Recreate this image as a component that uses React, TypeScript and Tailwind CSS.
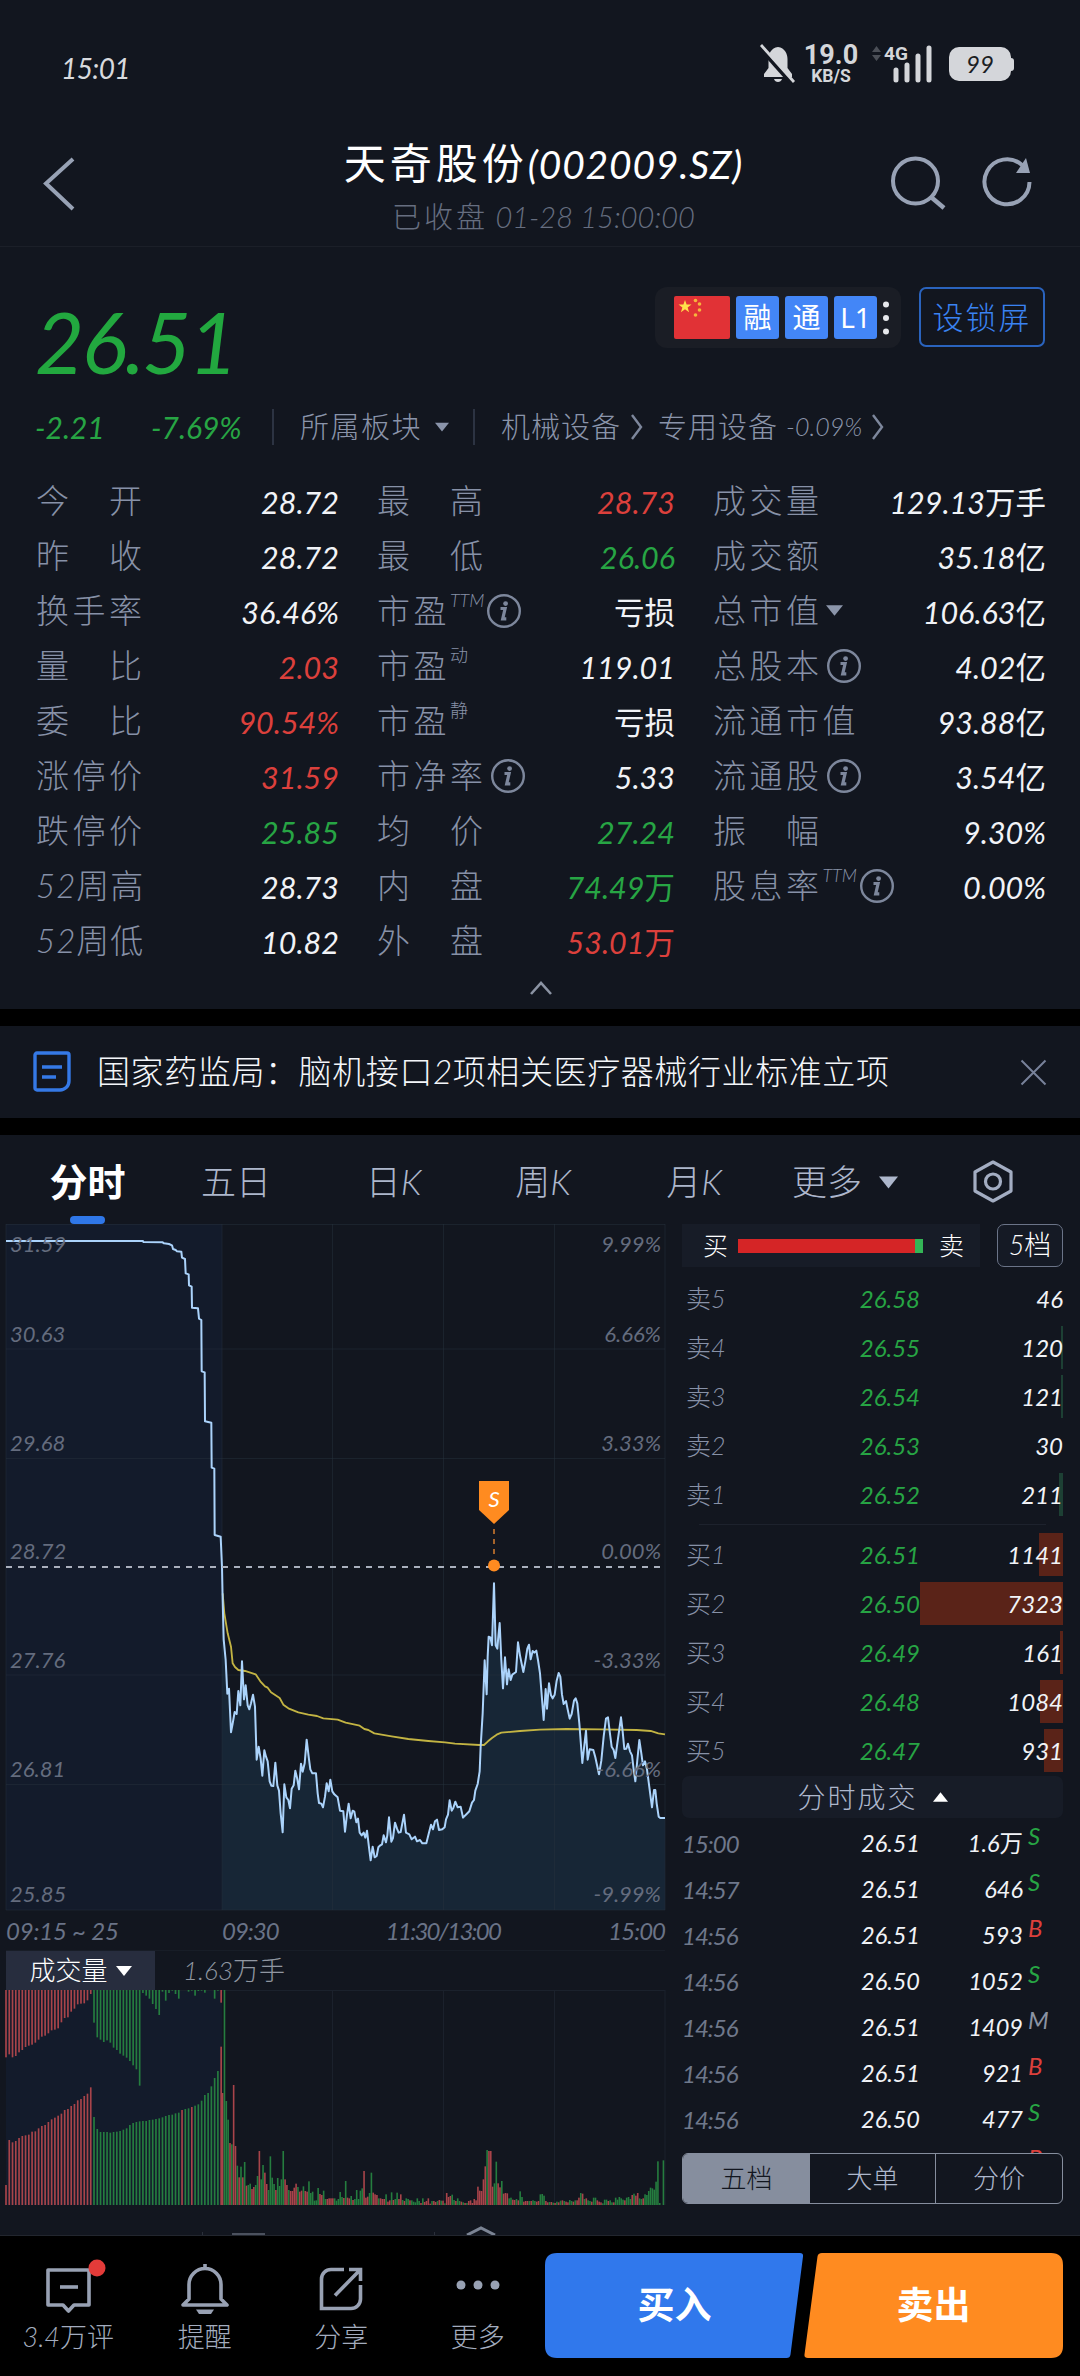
import type { ReactNode } from 'react'
import clsx from 'clsx'

type Tone = 'plain' | 'up' | 'down'

interface Stat {
  label: string
  value: string
  tone?: Tone
  sup?: string
  info?: boolean
  caret?: boolean
}

const toneClass: Record<Tone, string> = {
  plain: 'text-[#f1f3f7]',
  up: 'text-[#dc403c]',
  down: 'text-[#27a544]',
}

const statColumns: Stat[][] = [
  [
    { label: '今开', value: '28.72' },
    { label: '昨收', value: '28.72' },
    { label: '换手率', value: '36.46%' },
    { label: '量比', value: '2.03', tone: 'up' },
    { label: '委比', value: '90.54%', tone: 'up' },
    { label: '涨停价', value: '31.59', tone: 'up' },
    { label: '跌停价', value: '25.85', tone: 'down' },
    { label: '52周高', value: '28.73' },
    { label: '52周低', value: '10.82' },
  ],
  [
    { label: '最高', value: '28.73', tone: 'up' },
    { label: '最低', value: '26.06', tone: 'down' },
    { label: '市盈', sup: 'TTM', info: true, value: '亏损' },
    { label: '市盈', sup: '动', value: '119.01' },
    { label: '市盈', sup: '静', value: '亏损' },
    { label: '市净率', info: true, value: '5.33' },
    { label: '均价', value: '27.24', tone: 'down' },
    { label: '内盘', value: '74.49万', tone: 'down' },
    { label: '外盘', value: '53.01万', tone: 'up' },
  ],
  [
    { label: '成交量', value: '129.13万手' },
    { label: '成交额', value: '35.18亿' },
    { label: '总市值', caret: true, value: '106.63亿' },
    { label: '总股本', info: true, value: '4.02亿' },
    { label: '流通市值', value: '93.88亿' },
    { label: '流通股', info: true, value: '3.54亿' },
    { label: '振幅', value: '9.30%' },
    { label: '股息率', sup: 'TTM', info: true, value: '0.00%' },
  ],
]

const sells = [
  { name: '卖5', price: '26.58', qty: 46, bar: 0 },
  { name: '卖4', price: '26.55', qty: 120, bar: 2 },
  { name: '卖3', price: '26.54', qty: 121, bar: 2 },
  { name: '卖2', price: '26.53', qty: 30, bar: 0 },
  { name: '卖1', price: '26.52', qty: 211, bar: 4 },
]

const buys = [
  { name: '买1', price: '26.51', qty: 1141, bar: 24 },
  { name: '买2', price: '26.50', qty: 7323, bar: 143 },
  { name: '买3', price: '26.49', qty: 161, bar: 3 },
  { name: '买4', price: '26.48', qty: 1084, bar: 23 },
  { name: '买5', price: '26.47', qty: 931, bar: 19 },
]

const trades = [
  { time: '15:00', price: '26.51', qty: '1.6万', side: 'S' },
  { time: '14:57', price: '26.51', qty: '646', side: 'S' },
  { time: '14:56', price: '26.51', qty: '593', side: 'B' },
  { time: '14:56', price: '26.50', qty: '1052', side: 'S' },
  { time: '14:56', price: '26.51', qty: '1409', side: 'M' },
  { time: '14:56', price: '26.51', qty: '921', side: 'B' },
  { time: '14:56', price: '26.50', qty: '477', side: 'S' },
  { time: '', price: '', qty: '', side: 'B' },
]

const sideClass: Record<string, string> = {
  S: 'text-[#27a544]',
  B: 'text-[#dc403c]',
  M: 'text-[#8b93a3]',
}

// Chart series are kept in thirds of a pixel, x from the page edge, y from the chart top
const shift = (pts: number[][], dx: number, dy: number) =>
  pts.map(([x, y]) => [x + dx, y + dy])

const auction = [
  [18, 51], [429, 51], [430, 54], [488, 55], [492, 58], [507, 60], [516, 64], [519, 75], [527, 78],
  [531, 82], [544, 83], [546, 101], [555, 105], [557, 148], [566, 151], [567, 184], [575, 188],
  [576, 251], [594, 253], [597, 284], [604, 288], [605, 442], [614, 445], [615, 592], [634, 596],
  [635, 731], [643, 734], [644, 933], [662, 938], [666, 1029],
]

const morning = shift(
  [
    [23, 0], [26, 118], [32, 180], [37, 281], [42, 266], [48, 397], [53, 371], [59, 336], [65, 342],
    [70, 273], [76, 316], [81, 184], [87, 298], [92, 256], [98, 316], [103, 328], [108, 310],
    [114, 284], [120, 320], [125, 479], [131, 440], [137, 476], [142, 527], [148, 451], [153, 470],
    [158, 484], [164, 544], [169, 557], [175, 558], [181, 488], [187, 556], [192, 572], [197, 640],
    [203, 697], [208, 553], [214, 592], [220, 600], [225, 625], [230, 566], [236, 556], [241, 512],
    [247, 538], [252, 568], [258, 491], [263, 515], [269, 490], [275, 419], [281, 470], [286, 508],
    [292, 520], [303, 520], [308, 580], [312, 609], [319, 611], [324, 622], [330, 590], [335, 550],
    [341, 574], [346, 539], [352, 574], [358, 583], [368, 592], [375, 632], [385, 634], [390, 695],
    [396, 644], [401, 611], [407, 655], [413, 632], [418, 635], [424, 667], [429, 656], [434, 698],
    [440, 706], [446, 698], [451, 713], [456, 692], [462, 742], [467, 781], [473, 740], [479, 772],
    [485, 768], [490, 742], [496, 736], [501, 733], [506, 706], [513, 727], [517, 706], [522, 652],
    [529, 725], [534, 714], [540, 668], [546, 686], [551, 698], [557, 696], [567, 644], [573, 698],
    [583, 703], [590, 718], [600, 710], [606, 724], [615, 720], [622, 730], [634, 730], [640, 706],
    [648, 674], [654, 688], [660, 664], [666, 659], [672, 690], [682, 688],
  ],
  645,
  1128
)

const afternoon = shift(
  [
    [14, 742], [18, 718], [24, 704], [29, 661], [35, 692], [40, 684], [46, 665], [53, 682], [62, 680],
    [69, 713], [80, 702], [88, 694], [96, 668], [102, 660], [106, 632], [113, 612], [119, 574],
    [122, 500], [128, 400], [134, 241], [140, 343], [143, 230], [146, 170], [151, 172], [156, 196],
    [162, 10], [167, 196], [172, 206], [175, 170], [179, 129], [184, 240], [189, 325], [195, 232],
    [201, 313], [206, 268], [212, 300], [217, 284], [228, 276], [234, 187], [240, 226], [250, 276],
    [256, 244], [262, 206], [267, 194], [272, 238], [278, 213], [283, 218], [289, 212], [294, 240],
    [300, 280], [311, 420], [317, 327], [321, 386], [327, 310], [333, 346], [338, 355], [344, 344],
    [350, 302], [356, 279], [361, 290], [366, 344], [371, 372], [378, 363], [383, 388], [389, 416],
    [395, 402], [402, 362], [407, 355], [412, 370], [418, 430], [427, 549], [438, 452], [443, 539],
    [449, 508], [460, 510], [466, 532], [477, 583], [484, 542], [491, 470], [498, 416], [504, 412],
    [509, 454], [515, 500], [521, 510], [526, 534], [532, 490], [543, 412], [548, 454], [553, 507],
    [559, 506], [564, 491], [570, 514], [576, 526], [581, 568], [586, 604], [592, 540], [598, 480],
    [604, 520], [609, 556], [615, 544], [621, 568], [636, 682], [642, 630], [646, 630], [650, 670],
    [656, 710], [661, 714], [675, 714],
  ],
  1320,
  1068
)

const averageLine = [
  ...shift(
    [
      [23, -20], [28, 40], [38, 100], [48, 140], [53, 190], [60, 201], [70, 210], [90, 213], [122, 223],
      [136, 244], [150, 259], [158, 263], [168, 277], [194, 294], [205, 314], [220, 325], [250, 337],
      [280, 344], [306, 348], [325, 355], [368, 359], [392, 368], [434, 377], [448, 387], [460, 390],
      [478, 400], [530, 409], [580, 417], [640, 423], [690, 427],
    ],
    645,
    1128
  ),
  ...shift(
    [
      [15, 487], [45, 491], [118, 495], [132, 495], [144, 484], [156, 474], [170, 464], [184, 458],
      [240, 453], [300, 449], [380, 447], [480, 448], [590, 450], [632, 453], [655, 460], [675, 463],
    ],
    1320,
    1068
  ),
]

const toPath = (pts: number[][]) => pts.map(([x, y]) => `${x},${y}`).join(' ')

const intraday = [...morning, ...afternoon]
const pricePath = toPath([...auction, ...intraday])
const areaPath = toPath([[666, 2058], [666, 1029], ...intraday, [1995, 2058]])

// Volumes: positive is a red bar, negative a green one
const auctionMatched = [
  60, 195, 188, 192, 201, 207, 209, 211, 220, 221, 230, 237, 240, 249, 257, 262, 268, 274, 285, 288,
  297, 303, 314, 318, 327, 334, 353, -264, -228, -219, -219, -219, -217, -219, -220, -222, -226,
  -230, -240, -246, -249, -251, -252, -252, -255, -256, -258, -260, -263, -267, -270, -271, -275,
  -277, 285, -288, -290, 294, -298, -302, -313, -330, -336, -356, -381, -402, 475,
]

const auctionUnmatched = [
  202, 193, 202, 198, 187, 180, 171, 167, 164, 158, 149, 140, 137, 130, 121, 119, 115, 97, 84, 82, 65,
  56, 43, 41, 40, 31, 12, -98, -142, -149, -156, -151, -158, -173, -180, -191, -197, -203, -213, -226,
  -238, -287, -9, -17, -26, -42, -57, -75, -5, -32, -9, -2, -12, -26, 0, 0, -5, -2, -17, -3, -2, -8, 0,
  0, -26, -2, 38,
]

const minuteVolume = [
  336, -645, -312, -256, 186, -182, 360, 177, -118, 83, -115, 83, -129, 58, -60, -64, 48, 54, -60, -87,
  162, -77, -120, 97, 63, -45, -146, -82, -63, 45, -81, -57, -77, -162, 77, 60, -45, 42, 42, 52, 64,
  -54, 40, 43, -56, 42, 40, -71, -36, -40, -13, -14, -51, 33, 30, -43, -18, 18, 20, 20, 20, -20, -13,
  -18, -39, -24, 21, -72, 22, 20, -27, 15, -18, -45, -18, -43, -50, 102, 22, 25, -36, -97, 37, 32, 30,
  -20, 20, 18, 18, -32, 10, 14, -38, 15, -18, -37, 18, 32, -15, 12, -20, -18, 14, -14, -10, -8, -20,
  -12, 6, -20, 9, 12, 20, 4, -12, 12, 9, -12, 15, -13, 13, -5, 36, 24, 27, -31, -15, 12, -20, -12, 10,
  -8, 6, -6, 12, 14, 6, 18, 14, 55, 43, 42, 77, 116, -165, 162, 162, 55, -65, -130, 65, 53, -72, 34, 36,
  35, -20, -22, 16, 15, -18, 14, -41, -24, 10, 12, 12, -12, 12, -14, -12, 10, 12, -32, -33, -28, 12, 8,
  -9, 9, -7, 6, -10, 8, -13, 14, -12, 10, 8, -15, -12, 10, -14, 14, 22, -36, 34, -18, 20, -14, -12, 10,
  -22, -22, 14, 10, 8, -5, -16, -16, 12, -14, -8, 8, -22, -16, -24, -20, -16, 14, -22, -24, -18, 30,
  -34, 28, 36, -20, -18, 20, -32, -30, -42, -52, -50, -46, -70, -131, -6, 0, -134,
]

const gridX = [6, 222, 332.5, 443.5, 554.5, 665]

const priceLabels = [
  { y: 20, left: '31.59', right: '9.99%' },
  { y: 110, left: '30.63', right: '6.66%' },
  { y: 219, left: '29.68', right: '3.33%' },
  { y: 327, left: '28.72', right: '0.00%' },
  { y: 436, left: '27.76', right: '-3.33%' },
  { y: 545, left: '26.81', right: '-6.66%' },
  { y: 670, left: '25.85', right: '-9.99%' },
]

function InfoIcon({ className }: { className?: string }) {
  return (
    <svg className={clsx('w-[36px] h-[36px] shrink-0', className)} viewBox="0 0 36 36" fill="none">
      <circle cx="18" cy="18" r="15.8" stroke="#7d879c" strokeWidth="2.4" />
      <circle cx="19.6" cy="10.6" r="2.4" fill="#7d879c" />
      <path d="M14.5 15.5h4.6l-2.4 10.4h3.6" stroke="#7d879c" strokeWidth="3.2" />
    </svg>
  )
}

function Caret({ className }: { className: string }) {
  return (
    <svg className={className} viewBox="0 0 16 10" fill="currentColor">
      <path d="M0 0h16L8 10z" />
    </svg>
  )
}

function StatusBar() {
  return (
    <div className="h-[120px] pt-[34px] pl-[61px] pr-[66px] flex justify-between">
      <span className="h-[68px] leading-[68px] text-[28px] tracking-[-0.600px] font-normal text-[#d8dade]">15:01</span>
      <div className="h-[60px] flex items-center text-[#d4d6da]">
        <svg className="w-[38px] h-[40px]" viewBox="0 0 38 40">
          <path
            d="M19 3c-7 1-9.500 7-9.500 12v9L5 30v3h28v-3l-4.500-6v-9c0-5-2.500-11-9.500-12zM15 35h8c-1 4-7 4-8 0z"
            fill="currentColor"
          />
          <path d="M1 4l32 36" stroke="#12161f" strokeWidth="4" />
          <path d="M2 1l33 37" stroke="currentColor" strokeWidth="2.8" />
        </svg>
        <div className="ml-[5px] w-[58px] flex flex-col items-center font-['Roboto'] font-bold not-italic">
          <span className="text-[27px] leading-[25px]">19.0</span>
          <span className="text-[17.500px] leading-[17px]">KB/S</span>
        </div>
        <svg className="ml-[12px] w-[62px] h-[38px]" viewBox="0 0 62 38">
          <path d="M0 7l4.5-6L9 7zM0 10l4.5 6L9 10z" fill="#4b4f57" />
          <text x="12" y="15" fontSize="19" fontWeight="700" fontStyle="normal" fontFamily="Roboto" fill="currentColor">
            4G
          </text>
          <path
            d="M24 25v10M35 20v15M46 11v24M57 3v32"
            stroke="currentColor"
            strokeWidth="5"
            strokeLinecap="round"
          />
        </svg>
        <div className="ml-[15px] flex items-center">
          <span className="w-[62px] h-[34px] rounded-[10px] bg-[#d4d6da] text-[#1b1e24] text-[24px] font-normal leading-[34px] text-center">
            99
          </span>
          <span className="w-[3px] h-[13px] rounded-r bg-[#d4d6da]" />
        </div>
      </div>
    </div>
  )
}

function Header() {
  return (
    <div className="h-[127px] border-b border-[#1b1f28] pl-[42px] pr-[46px] flex text-[#98a2b5]">
      <svg className="mt-[36px] w-[34px] h-[56px]" viewBox="0 0 34 56" fill="none">
        <path d="M31 3L4 27.500l27 25.500" stroke="currentColor" strokeWidth="4" />
      </svg>
      <div className="flex-1 ml-[121px] flex flex-col items-center">
        <h1 className="mt-[18px] h-[50px] leading-[50px] text-[42px] font-normal text-white whitespace-nowrap">
          <span className="tracking-[4px]">天奇股份</span>
          <span className="text-[39px] tracking-[0.800px]">(002009.SZ)</span>
        </h1>
        <p className="mt-[7px] h-[44px] leading-[44px] text-[29px] text-[#666e80] whitespace-nowrap">
          <span className="tracking-[3px]">已收盘</span> 01-28 15:00:00
        </p>
      </div>
      <svg className="mt-[36px] w-[58px] h-[56px]" viewBox="0 0 58 56" fill="none">
        <circle cx="25.500" cy="25" r="22.500" stroke="currentColor" strokeWidth="4" />
        <path d="M41 41l13 11" stroke="currentColor" strokeWidth="4.500" />
      </svg>
      <svg className="ml-[32px] mt-[36px] w-[54px] h-[56px]" viewBox="0 0 54 56" fill="none">
        <path d="M49.500 26A22.500 22.500 0 1 1 42 9" stroke="currentColor" strokeWidth="4" />
        <path d="M46 2l4 15H36z" fill="currentColor" />
      </svg>
    </div>
  )
}

function Badge({ children }: { children: ReactNode }) {
  return (
    <span className="w-[43px] h-[43px] rounded-[3px] bg-[#4386f7] text-white text-[28px] font-normal leading-[42px] text-center not-italic font-['Noto_Sans','Noto_Sans_CJK_SC',sans-serif]">
      {children}
    </span>
  )
}

function PriceBlock() {
  return (
    <div className="h-[226px] px-[35px]">
      <div className="h-[146px] flex items-start">
        <span className="mt-[44px] h-[100px] leading-[100px] text-[85px] tracking-[-2.500px] font-normal text-[#22a83f]">
          26.51
        </span>
        <div className="ml-auto mt-[40px] h-[61px] w-[246px] rounded-[12px] bg-[#1a1d25] pl-[19px] flex items-center gap-[6px]">
          <svg className="w-[56px] h-[43px]" viewBox="0 0 56 43">
            <rect width="56" height="43" rx="2" fill="#e13236" />
            <path
              d="M11 4l1.600 4.600h4.900l-3.900 2.900 1.500 4.700-4.100-2.900-4.100 2.900 1.500-4.700-3.900-2.900h4.900z"
              fill="#ffe04a"
            />
            <g fill="#f5b53c">
              <circle cx="21.500" cy="4.500" r="1.800" />
              <circle cx="25.500" cy="8" r="1.800" />
              <circle cx="25.500" cy="14" r="1.800" />
              <circle cx="21.500" cy="19" r="1.800" />
            </g>
          </svg>
          <Badge>融</Badge>
          <Badge>通</Badge>
          <Badge>L1</Badge>
          <svg className="w-[6px] h-[36px]" viewBox="0 0 6 36" fill="#e6e8ec">
            <circle cx="3" cy="4.500" r="3" />
            <circle cx="3" cy="18" r="3" />
            <circle cx="3" cy="31.500" r="3" />
          </svg>
        </div>
        <button className="ml-[18px] mt-[40px] w-[126px] h-[60px] rounded-[7px] border-2 border-[#2a63bd] text-[#3a83f2] text-[31px] tracking-[2px] leading-[56px]">
          设锁屏
        </button>
      </div>
      <div className="h-[68px] flex items-center whitespace-nowrap text-[28px] text-[#8a94aa]">
        <span className="w-[116px] text-[30px] font-normal text-[#27a544]">-2.21</span>
        <span className="w-[121px] text-[30px] font-normal text-[#27a544]">-7.69%</span>
        <span className="w-[2px] h-[36px] bg-[#2c3342]" />
        <span className="ml-[26px] text-[29px] tracking-[1.500px]">所属板块</span>
        <Caret className="ml-[13px] w-[14px] h-[10px]" />
        <span className="ml-[24px] w-[2px] h-[36px] bg-[#2c3342]" />
        <span className="ml-[26px] text-[29px] tracking-[1px]">机械设备</span>
        <ChevronMark />
        <span className="ml-[15px] text-[29px] tracking-[1px]">专用设备</span>
        <span className="ml-[8px] text-[25px]">-0.09%</span>
        <ChevronMark />
      </div>
    </div>
  )
}

function ChevronMark() {
  return (
    <svg className="ml-[9px] w-[13px] h-[28px]" viewBox="0 0 13 28" fill="none">
      <path d="M2 2l9 12-9 12" stroke="#7d879c" strokeWidth="2.400" />
    </svg>
  )
}

function StatCell({ stat }: { stat: Stat }) {
  const spread = stat.label.length === 2 && !stat.sup
  const narrow = stat.label.startsWith('52')
  return (
    <div className="h-[55px] flex items-center">
      {spread ? (
        <span className="w-[106px] flex justify-between text-[33px] text-[#8791a7]">
          <span>{stat.label[0]}</span>
          <span>{stat.label[1]}</span>
        </span>
      ) : (
        <span className={clsx('text-[33px] text-[#8791a7]', narrow ? 'tracking-[1px]' : 'tracking-[3.500px]')}>
          {stat.label}
        </span>
      )}
      {stat.sup && <span className="-mt-[20px] text-[18px] text-[#8791a7]">{stat.sup}</span>}
      {stat.info && <InfoIcon className={stat.sup ? 'ml-[2px]' : 'ml-[3px]'} />}
      {stat.caret && <Caret className="ml-[3px] w-[17px] h-[11px] text-[#8b95aa]" />}
      <span className={clsx('ml-auto mt-[4px] text-[30.500px] font-normal', toneClass[stat.tone ?? 'plain'])}>
        {stat.value}
      </span>
    </div>
  )
}

function Stats() {
  return (
    <div className="h-[536px] pl-[36px] pr-[34px]">
      <div className="h-[503px] grid grid-cols-[303px_298px_333px] gap-x-[38px]">
        {statColumns.map((column, i) => (
          <div key={i}>
            {column.map((stat, j) => (
              <StatCell key={j} stat={stat} />
            ))}
          </div>
        ))}
      </div>
      <svg className="mx-auto mt-[4px] w-[24px] h-[16px]" viewBox="0 0 24 16" fill="none">
        <path d="M2 14L12 3l10 11" stroke="#8b93a3" strokeWidth="2.600" />
      </svg>
    </div>
  )
}

function NewsBar() {
  return (
    <div className="h-[92px] bg-[#12161f] pl-[33px] pr-[33px] flex items-center">
      <svg className="w-[38px] h-[42px]" viewBox="0 0 38 42" fill="none" stroke="#3579e6" strokeWidth="3.400">
        <path d="M4 2h30a2 2 0 0 1 2 2v26a9 9 0 0 1-9 9H4a2 2 0 0 1-2-2V4a2 2 0 0 1 2-2z" />
        <path d="M9 16h20M9 26h14" />
      </svg>
      <p className="ml-[26px] text-[33px] tracking-[0.600px] text-[#f4f6fa] whitespace-nowrap">
        国家药监局：脑机接口2项相关医疗器械行业标准立项
      </p>
      <svg className="ml-auto w-[27px] h-[27px]" viewBox="0 0 27 27">
        <path d="M1.500 1.500l24 24M25.500 1.500l-24 24" stroke="#78829a" strokeWidth="2" />
      </svg>
    </div>
  )
}

function ChartTabs() {
  return (
    <div className="h-[89px] pt-[12px] flex items-start text-[35px] leading-[68px] text-[#adb7cc]">
      <div className="w-[175px] flex flex-col items-center text-[38px] font-bold text-white">
        <span>分时</span>
        <span className="mt-[1px] w-[35px] h-[8px] rounded-full bg-[#2f77e8]" />
      </div>
      <span className="w-[122px] text-center">五日</span>
      <span className="w-[193px] text-center">日K</span>
      <span className="w-[106px] text-center">周K</span>
      <span className="w-[196px] text-center">月K</span>
      <span className="w-[78px] whitespace-nowrap">更多</span>
      <Caret className="ml-[9px] mt-[29px] w-[19px] h-[13px]" />
      <svg className="ml-[75px] mt-[13px] w-[40px] h-[43px]" viewBox="0 0 40 43" fill="none" stroke="#a3adc2" strokeWidth="3.200">
        <path d="M20 2l18 10v19L20 41 2 31V12z" strokeLinejoin="round" />
        <circle cx="20" cy="21.500" r="7.500" />
      </svg>
    </div>
  )
}

function PriceChart() {
  return (
    <svg className="block w-[680px] h-[687px]" viewBox="0 0 680 687">
      <rect x="6" y="0" width="216" height="686" fill="#131b2b" />
      <g transform="scale(0.33333)">
        <polygon points={areaPath} fill="#172636" />
      </g>
      <g stroke="#28323f" strokeOpacity="0.450" strokeWidth="1">
        {gridX.map((x) => (
          <path key={x} d={`M${x} 0v686`} />
        ))}
        {[0.5, 125, 234.5, 451, 560.5, 686].map((y) => (
          <path key={y} d={`M6 ${y}h659`} />
        ))}
      </g>
      <g transform="scale(0.33333)" fill="none" strokeLinejoin="round">
        <polyline points={toPath(averageLine)} stroke="#c3b443" strokeWidth="5.500" />
        <polyline points={pricePath} stroke="#abd3fb" strokeWidth="6" />
      </g>
      <path d="M6 343h655" stroke="#aab0bd" strokeWidth="2" strokeDasharray="6 6" />
      <g fontSize="22" fontWeight="400" fill="#646c7e">
        {priceLabels.map((l) => (
          <g key={l.y}>
            <text x="10" y={l.y + 8}>
              {l.left}
            </text>
            <text x="661" y={l.y + 8} textAnchor="end">
              {l.right}
            </text>
          </g>
        ))}
      </g>
      <path d="M479 257h30v29l-15 14-15-14z" fill="#ff8b20" />
      <text x="494" y="283" fontSize="22" fontWeight="400" fill="#fff" textAnchor="middle">
        S
      </text>
      <path d="M494 305v30" stroke="#a5632a" strokeWidth="2" strokeDasharray="5 5" />
      <circle cx="494" cy="341.500" r="6" fill="#ff8b20" />
    </svg>
  )
}

function VolumeChart() {
  const color = (v: number) => (v > 0 ? '#a8444a' : '#257d3f')
  return (
    <svg className="block w-[680px] h-[216px]" viewBox="0 0 680 216">
      <rect x="6" y="0" width="216" height="215" fill="#131b2b" />
      <g stroke="#1b212c" strokeWidth="1">
        <path d="M6 .5h659" />
        {gridX.slice(2).map((x) => (
          <path key={x} d={`M${x} 0v215`} />
        ))}
      </g>
      <g transform="scale(0.33333)">
        {auctionMatched.map((v, i) => (
          <rect key={i} x={15.5 + i * 9.78} y={645 - Math.abs(v)} width="5" height={Math.abs(v)} fill={color(v)} />
        ))}
        {auctionUnmatched.map((v, i) => (
          <rect key={i} x={15.5 + i * 9.78} y="0" width="5" height={Math.abs(v)} fill={color(v)} />
        ))}
        {minuteVolume.map((v, i) => (
          <rect key={i} x={665.5 + i * 5.51} y={645 - Math.abs(v)} width="4.8" height={Math.abs(v)} fill={color(v)} />
        ))}
      </g>
    </svg>
  )
}

function ChartColumn() {
  return (
    <div className="w-[680px]">
      <PriceChart />
      <div className="relative h-[39px] pl-[6px] pr-[15px] flex items-center justify-between text-[24px] font-normal tracking-[-1px] text-[#6a7387]">
        <span className="tracking-[-0.200px]">09:15 ~ 25</span>
        <span className="absolute left-[222px]">09:30</span>
        <span className="absolute left-[443px] -translate-x-1/2 tracking-[-1.700px]">11:30/13:00</span>
        <span>15:00</span>
      </div>
      <div className="ml-[6px] w-[659px] h-[40px] border-t border-[#181d27] flex items-center">
        <div className="w-[149px] h-[40px] bg-[#272d3e] flex items-center justify-center text-[26px] text-white">
          成交量
          <Caret className="ml-[8px] w-[16px] h-[12px]" />
        </div>
        <span className="ml-[28px] text-[26px] text-[#9096a1]">1.63万手</span>
      </div>
      <VolumeChart />
      <svg className="block w-[680px] h-[29px]" viewBox="0 0 680 29" fill="none">
        <path d="M202.500 26v3M434.500 26v3" stroke="#2b303b" />
        <path d="M232 28h33" stroke="#4b515e" strokeWidth="2" />
        <path d="M467 29l14-7 14 7" stroke="#7b8494" strokeWidth="3" />
      </svg>
    </div>
  )
}

function BookRow({ row, barClass }: { row: (typeof sells)[number]; barClass: string }) {
  return (
    <div className="relative h-[49px] flex items-center">
      <span
        className={clsx('absolute right-0 top-[3px] h-[43px]', barClass)}
        style={{ width: row.bar }}
      />
      <span className="w-[100px] pl-[4px] text-[25px] text-[#8791a7]">{row.name}</span>
      <span className="w-[138px] text-right text-[24px] font-normal text-[#27a544]">{row.price}</span>
      <span className="relative ml-auto text-[24px] font-normal text-[#f1f3f7]">{row.qty}</span>
    </div>
  )
}

function OrderBook() {
  return (
    <div className="w-[381px] ml-[2px]">
      <div className="flex justify-between">
        <div className="w-[298px] h-[43px] bg-[#171c27] pl-[21px] flex items-center text-[25px] text-white">
          买
          <div className="ml-[10px] w-[185px] h-[14px] flex">
            <span className="w-[177px] bg-[#d52526]" />
            <span className="flex-1 bg-[#34b556]" />
          </div>
          <span className="ml-[16px]">卖</span>
        </div>
        <div className="w-[66px] h-[43px] rounded-[7px] border border-[#6b7488] bg-[#151a25] text-[27px] leading-[40px] text-center text-white">
          5档
        </div>
      </div>
      <div className="mt-[7px]">
        {sells.map((row) => (
          <BookRow key={row.name} row={row} barClass="bg-[#1d4034]" />
        ))}
      </div>
      <div className="mx-[17px] my-[5px] h-px bg-[#1d222d]" />
      <div>
        {buys.map((row) => (
          <BookRow key={row.name} row={row} barClass="bg-[#5a2318]" />
        ))}
      </div>
      <div className="mt-[1px] h-[42px] rounded-[7px] bg-[#171c27] flex items-center justify-center text-[28px] tracking-[2px] text-[#adb7cc]">
        分时成交
        <Caret className="ml-[15px] w-[15px] h-[10px] rotate-180 text-white" />
      </div>
      <div className="mt-[3px] h-[332px] overflow-hidden">
        {trades.map((t, i) => (
          <div key={i} className="h-[46px] flex items-center text-[24px] font-normal text-[#f1f3f7]">
            <span className="w-[100px] tracking-[-1px] text-[#6f788b]">{t.time}</span>
            <span className="w-[138px] text-right text-[23.500px]">{t.price}</span>
            <span className="w-[103px] text-right text-[23.500px]">{t.qty}</span>
            <span className={clsx('ml-[5px] -mt-[17px]', sideClass[t.side])}>{t.side}</span>
          </div>
        ))}
      </div>
      <div className="h-[51px] rounded-[6px] border border-[#868e9e] flex overflow-hidden text-[26px] leading-[48px] text-center text-[#adb7cc]">
        <span className="w-[127px] bg-[#868e9e] text-[#12161f]">五档</span>
        <span className="w-[126px] border-r border-[#868e9e]">大单</span>
        <span className="flex-1">分价</span>
      </div>
    </div>
  )
}

function FooterItem({ label, children }: { label: string; children: ReactNode }) {
  return (
    <div className="w-[136.500px] flex flex-col items-center">
      <div className="mt-[22px] h-[62px] flex items-center text-[#98a1b3]">{children}</div>
      <span className="h-[34px] leading-[34px] text-[27px] text-[#a3acbe] whitespace-nowrap">{label}</span>
    </div>
  )
}

function Footer() {
  return (
    <div className="h-[141px] bg-black border-t border-[#22262e] flex">
      <FooterItem label="3.4万评">
        <svg className="w-[62px] h-[56px] -mt-[6px] ml-[16px]" viewBox="0 0 62 56" fill="none" stroke="currentColor" strokeWidth="3.600">
          <path d="M3 12h41v35H29l-5.500 6-5.500-6H3z" strokeLinejoin="round" />
          <path d="M15 29h18" />
          <circle cx="52" cy="10" r="8.500" fill="#e33b39" stroke="none" />
        </svg>
      </FooterItem>
      <FooterItem label="提醒">
        <svg className="w-[50px] h-[52px]" viewBox="0 0 50 52" fill="none" stroke="currentColor" strokeWidth="3.600">
          <path d="M25 1v5M9 36V21.500a16 16 0 0 1 32 0V36l6 6H3z" strokeLinejoin="round" />
          <path d="M16 46.500h18l-3 4.500H19z" fill="currentColor" stroke="none" />
        </svg>
      </FooterItem>
      <FooterItem label="分享">
        <svg className="w-[44px] h-[44px]" viewBox="0 0 44 44" fill="none" stroke="currentColor" strokeWidth="3.600">
          <path d="M25 2.500H12A9.500 9.500 0 0 0 2.500 12v29.500H32a9.500 9.500 0 0 0 9.500-9.500V18" />
          <path d="M16 28.500L40 4M30 2.500h11.500V14" />
        </svg>
      </FooterItem>
      <FooterItem label="更多">
        <svg className="w-[44px] h-[10px] -mt-[8px]" viewBox="0 0 44 10" fill="currentColor">
          <circle cx="5" cy="5" r="4.500" />
          <circle cx="22" cy="5" r="4.500" />
          <circle cx="39" cy="5" r="4.500" />
        </svg>
      </FooterItem>
      <div className="relative -ml-px mt-[17px] w-[518px] h-[105px] flex text-[37px] font-bold text-white">
        <svg className="absolute inset-0 w-[518px] h-[105px]" viewBox="0 0 518 105">
          <path
            d="M12 0h243q3.500 0 3 3.500l-12.500 98q-.5 3.500-4 3.500H12Q0 105 0 93V12Q0 0 12 0z"
            fill="#3078ec"
          />
          <path
            d="M277 0h229q12 0 12 12v81q0 12-12 12H263q-4 0-3.500-3.500l13-98Q273 0 277 0z"
            fill="#ff8b20"
          />
        </svg>
        <span className="relative w-[260px] leading-[104px] text-center">买入</span>
        <span className="relative w-[260px] leading-[104px] text-center">卖出</span>
      </div>
    </div>
  )
}

export default function App() {
  return (
    <div className="w-[1080px] h-[2376px] overflow-hidden bg-black italic font-light [font-synthesis:none] font-['Lato','Noto_Sans_CJK_SC',sans-serif]">
      <div className="h-[1009px] bg-[#12161f]">
        <StatusBar />
        <Header />
        <PriceBlock />
        <Stats />
      </div>
      <div className="mt-[17px]">
        <NewsBar />
      </div>
      <div className="mt-[17px] h-[1100px] bg-[#12161f]">
        <ChartTabs />
        <div className="flex">
          <ChartColumn />
          <OrderBook />
        </div>
      </div>
      <Footer />
    </div>
  )
}
